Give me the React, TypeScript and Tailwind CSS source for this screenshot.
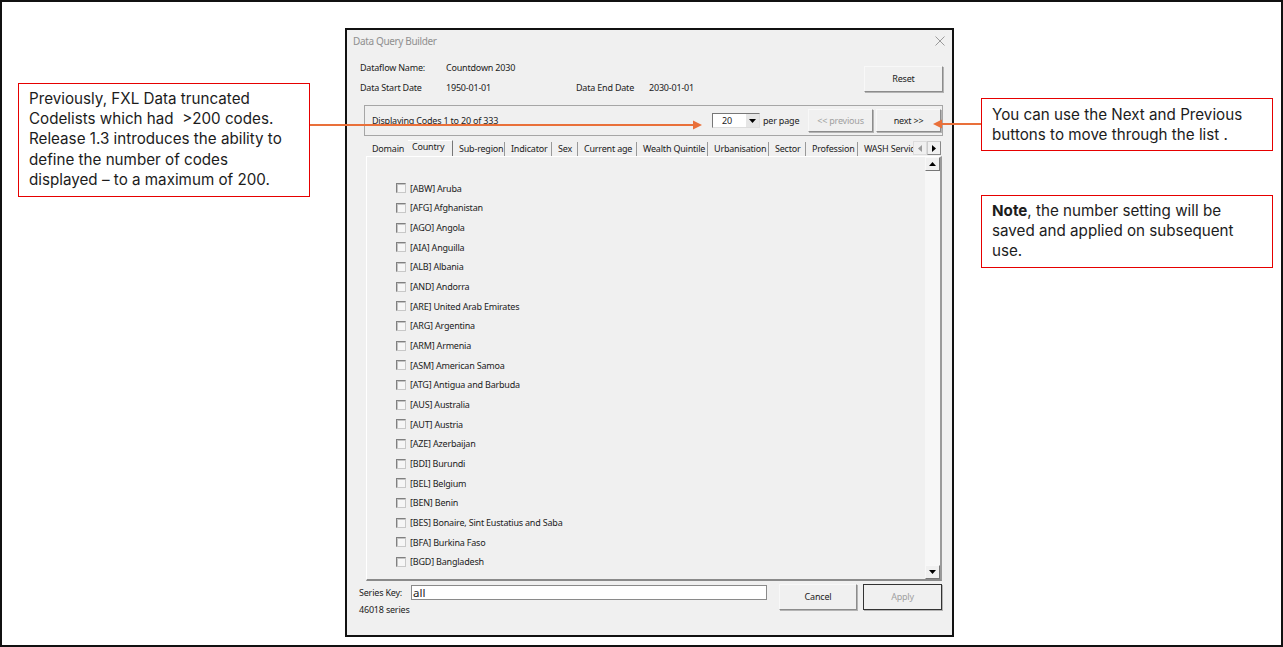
const codes = [
  "[ABW] Aruba",
  "[AFG] Afghanistan",
  "[AGO] Angola",
  "[AIA] Anguilla",
  "[ALB] Albania",
  "[AND] Andorra",
  "[ARE] United Arab Emirates",
  "[ARG] Argentina",
  "[ARM] Armenia",
  "[ASM] American Samoa",
  "[ATG] Antigua and Barbuda",
  "[AUS] Australia",
  "[AUT] Austria",
  "[AZE] Azerbaijan",
  "[BDI] Burundi",
  "[BEL] Belgium",
  "[BEN] Benin",
  "[BES] Bonaire, Sint Eustatius and Saba",
  "[BFA] Burkina Faso",
  "[BGD] Bangladesh",
]

const tabs = [
  { label: "Domain", width: "w-[42px]", bare: true },
  { label: "Country", width: "w-[45px]", active: true },
  { label: "Sub-region", width: "w-[52px]" },
  { label: "Indicator", width: "w-[47px]" },
  { label: "Sex", width: "w-[26px]" },
  { label: "Current age", width: "w-[59px]" },
  { label: "Wealth Quintile", width: "w-[71px]" },
  { label: "Urbanisation", width: "w-[61px]" },
  { label: "Sector", width: "w-[37px]" },
  { label: "Profession", width: "w-[52px]" },
  { label: "WASH Services", width: "w-[56px]", bare: true },
]

function Triangle({ dir }: { dir: "up" | "down" | "left" | "right" }) {
  const points = {
    up: "0,4 7,4 3.5,0",
    down: "0,0 7,0 3.5,4",
    left: "4,0 4,7 0,3.5",
    right: "0,0 0,7 4,3.5",
  }[dir]
  const vertical = dir === "up" || dir === "down"
  return (
    <svg width={vertical ? 7 : 4} height={vertical ? 4 : 7} className="block">
      <polygon points={points} fill={dir === "left" ? "#9a9a9a" : "#000"} />
    </svg>
  )
}

function WinButton({ label, className, disabled }: { label: string; className: string; disabled?: boolean }) {
  return (
    <div
      className={`flex items-center justify-center border border-t-[#f8f8f8] border-l-[#f8f8f8] border-r-[#8c8c8c] border-b-[#8c8c8c] bg-[#f0f0f0] shadow-[1px_1px_0_#b4b4b4] ${
        disabled ? "text-[#a0a0a0]" : "text-[#222]"
      } ${className}`}
    >
      {label}
    </div>
  )
}

function Callout({ className, children }: { className: string; children: React.ReactNode }) {
  return (
    <div
      className={`absolute border border-[#e60000] bg-white pl-[10px] font-['Inter',sans-serif] text-[15.2px] leading-[20.2px] text-[#1c1c1c] ${className}`}
    >
      {children}
    </div>
  )
}

function QueryDialog() {
  return (
    <div className="absolute left-[345px] top-[28px] flex h-[609px] w-[609px] flex-col border-2 border-[#111] bg-[#f0f0f0] font-['Noto_Sans',sans-serif] text-[9px] tracking-[-0.2px] text-[#222]">
      {/* title bar */}
      <div className="flex h-[22px] shrink-0 items-center justify-between pl-[6px] pr-[7px] text-[10px] tracking-[-0.35px] text-[#8f8f8f]">
        <span>Data Query Builder</span>
        <svg width="10" height="10" viewBox="0 0 10 10">
          <path d="M0.5 0.5L9.5 9.5M9.5 0.5L0.5 9.5" stroke="#9a9a9a" strokeWidth="1" fill="none" />
        </svg>
      </div>

      {/* dataflow info */}
      <div className="flex h-[53px] shrink-0 pl-[13px] pr-[9px]">
        <div className="flex-1 pt-[6px]">
          <div className="flex h-[20px] items-center">
            <span className="w-[86px]">Dataflow Name:</span>
            <span>Countdown 2030</span>
          </div>
          <div className="flex h-[20px] items-center">
            <span className="w-[86px]">Data Start Date</span>
            <span className="w-[130px]">1950-01-01</span>
            <span className="w-[73px]">Data End Date</span>
            <span>2030-01-01</span>
          </div>
        </div>
        <WinButton label="Reset" className="mt-[14px] h-[26px] w-[79px]" />
      </div>

      {/* pager */}
      <div className="ml-[17px] flex h-[31px] w-[579px] shrink-0 items-center border border-[#a6a6a6] pl-[7px] pr-[1px]">
        <span className="flex-1">Displaying Codes 1 to 20 of 333</span>
        <div className="flex h-[15px] w-[48px] items-center justify-between border border-t-[#777] border-l-[#777] border-r-[#ddd] border-b-[#ddd] bg-white pl-[9px]">
          <span>20</span>
          <div className="flex h-full w-[13px] items-center justify-center bg-[#e6e6e6]">
            <Triangle dir="down" />
          </div>
        </div>
        <span className="ml-[3px] w-[45px]">per page</span>
        <WinButton label="<< previous" className="h-[23px] w-[65px]" disabled />
        <WinButton label="next >>" className="ml-[3px] h-[23px] w-[65px]" />
      </div>

      {/* tab strip */}
      <div className="relative ml-[19px] mt-[4px] flex h-[16px] w-[575px] shrink-0 items-end overflow-hidden">
        {tabs.map((tab) => (
          <div
            key={tab.label}
            className={
              tab.active
                ? `flex h-[16px] shrink-0 items-center overflow-hidden whitespace-nowrap border-r border-t border-t-white border-r-[#777] bg-[#f0f0f0] pb-[3px] pl-[4px] ${tab.width}`
                : `flex h-[14px] shrink-0 items-center overflow-hidden whitespace-nowrap pl-[6px] ${tab.bare ? "" : "border-r border-r-[#999]"} ${tab.width}`
            }
          >
            {tab.label}
          </div>
        ))}
        <div className="absolute bottom-[1px] right-0 flex h-[14px] w-[28px] bg-[#f0f0f0]">
          <div className="flex w-[14px] items-center justify-center border border-[#dcdcdc]">
            <Triangle dir="left" />
          </div>
          <div className="flex w-[14px] items-center justify-center border border-[#ccc] border-r-[#888] border-b-[#888]">
            <Triangle dir="right" />
          </div>
        </div>
      </div>

      {/* code list */}
      <div className="ml-[19px] flex h-[425px] w-[576px] shrink-0 border border-b-2 border-r-2 border-t-white border-l-white border-b-[#8a8a8a] border-r-[#9a9a9a]">
        <div className="flex-1 pl-[29px] pt-[21.5px]">
          {codes.map((code) => (
            <div key={code} className="flex h-[19.68px] items-center">
              <div className="h-[10px] w-[10px] border border-t-[#808080] border-l-[#808080] border-r-[#c8c8c8] border-b-[#c8c8c8] bg-[#f6f6f6] shadow-[inset_1px_1px_0_#c4c4c4]" />
              <span className="ml-[4px]">{code}</span>
            </div>
          ))}
        </div>
        <div className="flex w-[15px] flex-col justify-between bg-[#f7f7f7]">
          <div className="flex h-[14px] items-center justify-center border border-t-[#f8f8f8] border-l-[#f8f8f8] border-r-[#777] border-b-[#777] bg-[#f0f0f0]">
            <Triangle dir="up" />
          </div>
          <div className="flex h-[14px] items-center justify-center border border-t-[#f8f8f8] border-l-[#f8f8f8] border-r-[#777] border-b-[#777] bg-[#f0f0f0]">
            <Triangle dir="down" />
          </div>
        </div>
      </div>

      {/* footer */}
      <div className="flex flex-1 pl-[12px] pr-[10px] pt-[3px]">
        <div className="w-[408px] pt-[1px]">
          <div className="flex h-[15px] items-center">
            <span className="w-[52px] pt-[1px]">Series Key:</span>
            <div className="flex h-[15px] w-[356px] items-center border border-[#8a8a8a] bg-white pl-[1px] text-[11.5px] leading-none tracking-normal">
              all
            </div>
          </div>
          <div className="mt-[3px]">46018 series</div>
        </div>
        <WinButton label="Cancel" className="ml-[12px] h-[26px] w-[78px]" />
        <WinButton label="Apply" className="ml-[6px] h-[26px] w-[79px] !border-[#333]" disabled />
      </div>
    </div>
  )
}

export default function App() {
  return (
    <div className="relative h-[647px] w-[1283px] overflow-hidden border-2 border-[#111] bg-white">
      <div className="absolute -left-[2px] -top-[2px] h-[647px] w-[1283px]">
        <QueryDialog />

        <Callout className="left-[18px] top-[83px] h-[114px] w-[292px] pt-[5px]">
          Previously, FXL Data truncated
          <br />
          Codelists which had &nbsp;&gt;200 codes.
          <br />
          Release 1.3 introduces the ability to
          <br />
          define the number of codes
          <br />
          displayed – to a maximum of 200.
        </Callout>

        <Callout className="left-[981px] top-[98px] h-[53px] w-[292px] pt-[6px]">
          You can use the Next and Previous
          <br />
          buttons to move through the list .
        </Callout>

        <Callout className="left-[981px] top-[195px] h-[73px] w-[292px] pt-[5px]">
          <b>Note</b>, the number setting will be
          <br />
          saved and applied on subsequent
          <br />
          use.
        </Callout>

        {/* arrows over the dialog */}
        <svg className="absolute left-0 top-0" width="1283" height="647">
          <path d="M310 125H695" stroke="#e9703a" strokeWidth="2" fill="none" />
          <polygon points="702,125 693,120.5 693,129.5" fill="#e9703a" />
          <path d="M981 124H940" stroke="#e9703a" strokeWidth="2" fill="none" />
          <polygon points="933,124 942,119.5 942,128.5" fill="#e9703a" />
        </svg>
      </div>
    </div>
  )
}
